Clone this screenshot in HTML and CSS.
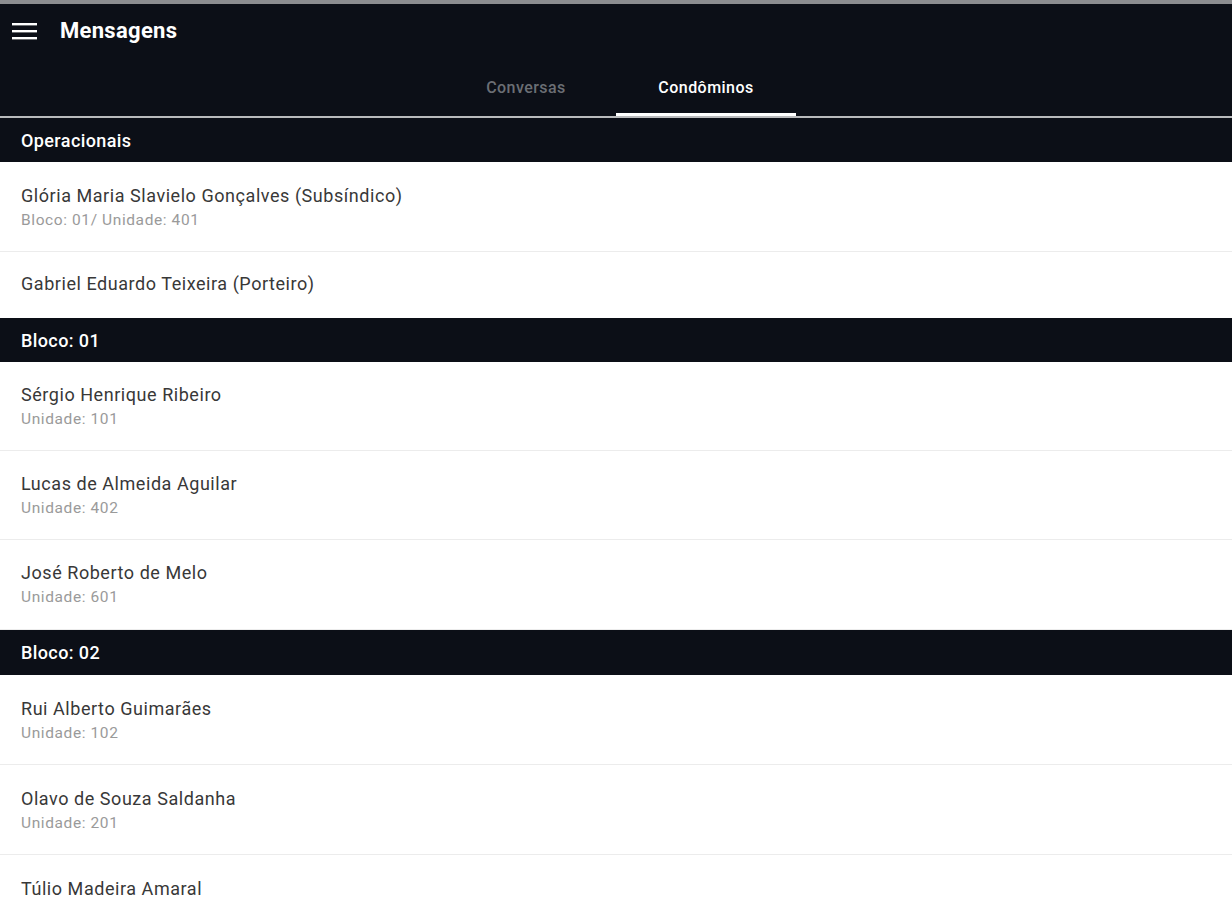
FILE: index.html
```html
<!DOCTYPE html>
<html lang="pt">
<head>
<meta charset="utf-8">
<title>Mensagens</title>
<link rel="stylesheet" href="styles.css">
</head>
<body>
<div class="app">
  <header class="appbar">
    <div class="toolbar">
      <button class="menu" aria-label="Menu">
        <svg width="26" height="18" viewBox="0 0 26 18"><rect x="0" y="1" width="25" height="2.4" fill="#fff"/><rect x="0" y="8" width="25" height="2.4" fill="#fff"/><rect x="0" y="15" width="25" height="2.4" fill="#fff"/></svg>
      </button>
      <h1 class="title">Mensagens</h1>
    </div>
    <nav class="tabs">
      <div class="tab">Conversas</div>
      <div class="tab active">Condôminos</div>
    </nav>
  </header>
  <main class="list">
    <div class="section">Operacionais</div>
    <div class="item tall"><div class="name">Glória Maria Slavielo Gonçalves (Subsíndico)</div><div class="sub">Bloco: 01/ Unidade: 401</div></div>
    <div class="item single"><div class="name">Gabriel Eduardo Teixeira (Porteiro)</div></div>
    <div class="section">Bloco: 01</div>
    <div class="item"><div class="name">Sérgio Henrique Ribeiro</div><div class="sub">Unidade: 101</div></div>
    <div class="item"><div class="name">Lucas de Almeida Aguilar</div><div class="sub">Unidade: 402</div></div>
    <div class="item last"><div class="name">José Roberto de Melo</div><div class="sub">Unidade: 601</div></div>
    <div class="section wide">Bloco: 02</div>
    <div class="item tall"><div class="name">Rui Alberto Guimarães</div><div class="sub">Unidade: 102</div></div>
    <div class="item tall"><div class="name">Olavo de Souza Saldanha</div><div class="sub">Unidade: 201</div></div>
    <div class="item tall"><div class="name">Túlio Madeira Amaral</div><div class="sub">Unidade: 301</div></div>
  </main>
</div>
</body>
</html>
```
FILE: styles.css
```css
* { box-sizing: border-box; }
html, body { margin: 0; padding: 0; }
body {
  font-family: Roboto, "Liberation Sans", Arial, sans-serif;
  background: #fff;
  width: 1232px;
  height: 900px;
  overflow: hidden;
}
.app { display: flex; flex-direction: column; }
.appbar {
  background: #0c0f17;
  border-top: 4px solid #8c8d90;
  border-bottom: 2px solid #b9babc;
}
.toolbar {
  height: 52px;
  display: flex;
  align-items: center;
  padding-left: 12px;
}
.menu {
  background: none;
  border: 0;
  padding: 0;
  width: 26px;
  height: 18px;
  display: flex;
  margin-top: 1px;
}
.title {
  margin: 0 0 0 22px;
  color: #fff;
  font-size: 22px;
  font-weight: 700;
  letter-spacing: 0.3px;
}
.tabs {
  display: flex;
  justify-content: center;
  height: 60px;
}
.tab {
  width: 180px;
  display: flex;
  align-items: center;
  justify-content: center;
  padding-top: 5px;
  color: #6b6e74;
  font-size: 16px;
  font-weight: 500;
  letter-spacing: 0.45px;
  border-bottom: 3px solid transparent;
}
.tab.active {
  color: #fff;
  border-bottom-color: #fff;
}
.section {
  background: #0c0f17;
  color: #fff;
  height: 44px;
  display: flex;
  align-items: center;
  padding-left: 21px;
  font-size: 18px;
  font-weight: 500;
  letter-spacing: 0.4px;
}
.section.wide { height: 45px; }
.item {
  height: 89px;
  padding: 22px 21px 0;
  border-bottom: 1px solid #ececec;
  display: flex;
  flex-direction: column;
}
.item.tall { height: 90px; padding-top: 23px; }
.item.last { height: 90px; }
.item.single { height: 66px; border-bottom: 0; padding-top: 21px; }
.name {
  color: #383838;
  font-size: 18px;
  line-height: 22px;
  letter-spacing: 0.55px;
}
.sub {
  color: #9a9a9a;
  font-size: 15.5px;
  line-height: 20px;
  margin-top: 3px;
  letter-spacing: 0.6px;
}
```
